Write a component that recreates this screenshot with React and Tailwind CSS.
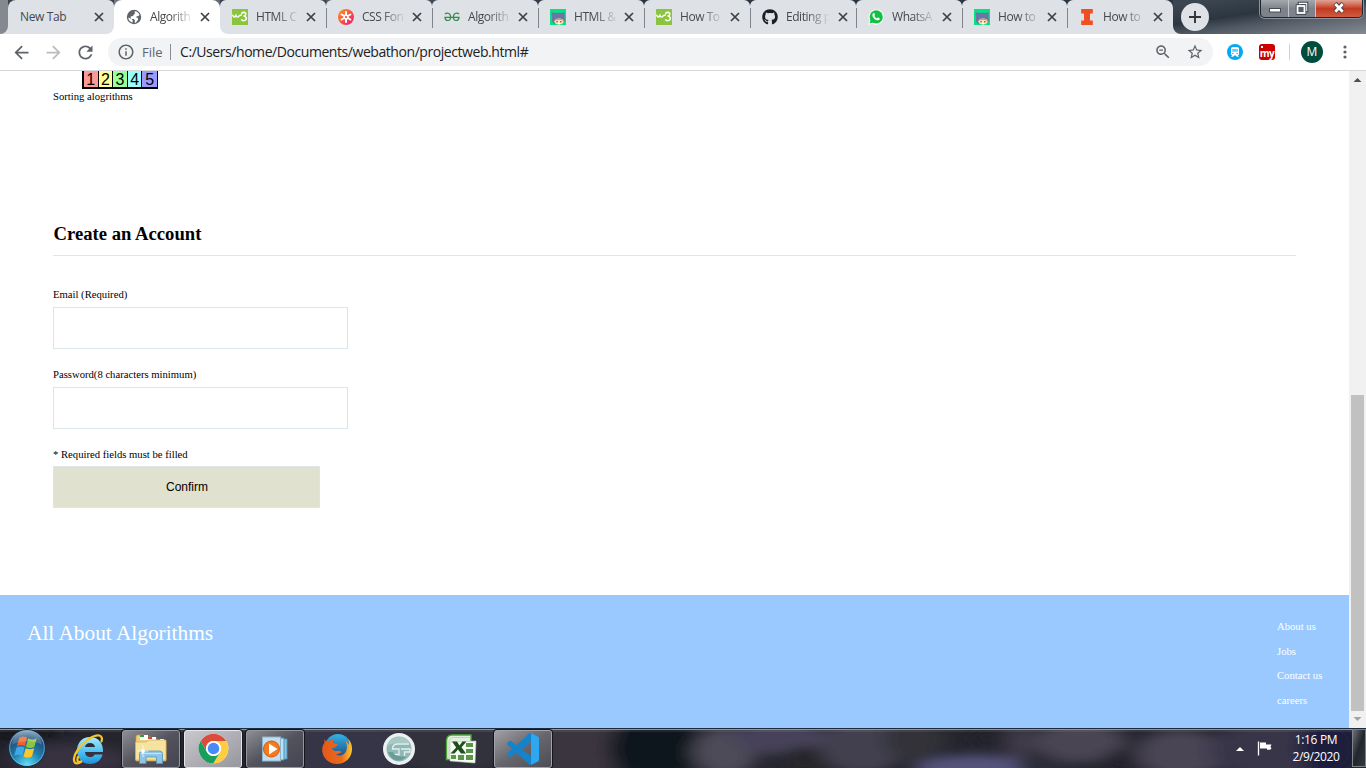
import React from "react";
import { FaGithub } from "react-icons/fa";

const PATHS = {
  back: "M20 11H7.83l5.59-5.59L12 4l-8 8 8 8 1.41-1.41L7.83 13H20v-2z",
  forward: "M12 4l-1.41 1.41L16.17 11H4v2h12.17l-5.58 5.59L12 20l8-8z",
  reload:
    "M17.65 6.35C16.2 4.9 14.21 4 12 4c-4.42 0-7.99 3.58-7.99 8s3.57 8 7.99 8c3.73 0 6.84-2.55 7.73-6h-2.08c-.82 2.33-3.04 4-5.65 4-3.31 0-6-2.69-6-6s2.69-6 6-6c1.66 0 3.14.69 4.22 1.78L13 11h7V4l-2.35 2.35z",
  info: "M11 17h2v-6h-2v6zm1-15C6.48 2 2 6.48 2 12s4.48 10 10 10 10-4.48 10-10S17.52 2 12 2zm0 18c-4.41 0-8-3.59-8-8s3.59-8 8-8 8 3.59 8 8-3.59 8-8 8zM11 9h2V7h-2v2z",
  zoomOut:
    "M15.5 14h-.79l-.28-.27C15.41 12.59 16 11.11 16 9.5 16 5.91 13.09 3 9.5 3S3 5.91 3 9.5 5.91 16 9.5 16c1.61 0 3.09-.59 4.23-1.57l.27.28v.79l5 4.99L20.49 19l-4.99-5zm-6 0C7.01 14 5 11.99 5 9.5S7.01 5 9.5 5 14 7.01 14 9.5 11.99 14 9.5 14zM7 8.7h5v1.5H7z",
  star: "M22 9.24l-7.19-.62L12 2 9.19 8.63 2 9.24l5.46 4.73L5.82 21 12 17.27 18.18 21l-1.63-7.03L22 9.24zM12 15.4l-3.76 2.27 1-4.28-3.32-2.88 4.38-.38L12 6.1l1.71 4.04 4.38.38-3.32 2.88 1 4.28L12 15.4z",
  code: "M23.15 2.587L18.21.21a1.494 1.494 0 0 0-1.705.29l-9.46 8.63-4.12-3.128a.999.999 0 0 0-1.276.057L.327 7.261A1 1 0 0 0 .326 8.74L3.899 12 .326 15.26a1 1 0 0 0 .001 1.479L1.65 17.94a.999.999 0 0 0 1.276.057l4.12-3.128 9.46 8.63a1.492 1.492 0 0 0 1.704.29l4.942-2.377A1.5 1.5 0 0 0 24 20.06V3.939a1.5 1.5 0 0 0-.85-1.352zm-5.146 14.861L10.826 12l7.178-5.448v10.896z",
};

function Glyph({ d, className }) {
  return (
    <svg viewBox="0 0 24 24" className={className} fill="currentColor">
      <path d={d} />
    </svg>
  );
}

function GlobeIcon() {
  return (
    <svg viewBox="0 0 16 16" className="size-4">
      <circle cx="8" cy="8" r="7.2" fill="#5f6368" />
      <path
        d="M8.600 2.300C10.800 2.300 13 3.800 13.500 6L12 7.300l-1.300-.1-.6 1 1.700.8.400 1.500-2.200 3-1.300.4.200-2.500-1-1.300-2.500-.2L4.300 8l1.200-.8 1.600-.1.600-1.600 1.200-.6z"
        fill="#fff"
      />
      <path d="M2.300 8.600l3.200 1.300 1.200 1.300-.2 2.500C4 13 2.300 11 2.300 8.600z" fill="#fff" />
    </svg>
  );
}

function W3Icon() {
  return (
    <svg viewBox="0 0 16 16" className="size-4">
      <rect width="16" height="16" rx=".5" fill="#8bc53f" />
      <path
        d="M.8 6.200C1.500 8.500 3 8.500 4 6.400 4.700 8.700 6.500 8.700 7.400 6.500L9.300 6"
        fill="none"
        stroke="#fff"
        strokeWidth="1.400"
        strokeLinecap="round"
      />
      <path
        d="M9.800 4.200c2-1.600 4.600-.6 3.900 1.400-.3 1-1.300 1.400-2.300 1.500 2 0 3.300 1.200 2.800 2.900-.6 1.900-3.300 2.200-4.600.7"
        fill="none"
        stroke="#fff"
        strokeWidth="1.500"
        strokeLinecap="round"
      />
    </svg>
  );
}

function AsteriskIcon() {
  return (
    <svg viewBox="0 0 16 16" className="size-4">
      <defs>
        <linearGradient id="ast" x1="0" y1="0" x2="1" y2="1">
          <stop offset="0" stopColor="#ff9a1f" />
          <stop offset=".5" stopColor="#f8543f" />
          <stop offset="1" stopColor="#e8158a" />
        </linearGradient>
      </defs>
      <circle cx="8" cy="8" r="8" fill="url(#ast)" />
      <path
        d="M8 3v3M8 10v3M3.600 5.500l2.700 1.500M9.700 9l2.700 1.500M12.400 5.500l-2.700 1.500M6.300 9l-2.700 1.500"
        stroke="#fff"
        strokeWidth="2"
        strokeLinecap="round"
      />
      <circle cx="8" cy="8" r="2" fill="none" stroke="#fff" strokeWidth="1.300" />
    </svg>
  );
}

function GeeksIcon() {
  return (
    <svg viewBox="0 0 16 16" className="size-4">
      <path
        d="M1 5.300C2 3.700 6.600 3.300 6.600 8c0 4.600-5.300 4.600-5.600.4h14c-.3 4.200-5.600 4.200-5.600-.4 0-4.700 4.600-4.300 5.600-2.700"
        fill="none"
        stroke="#2f8d46"
        strokeWidth="1.200"
      />
    </svg>
  );
}

function CatIcon() {
  return (
    <svg viewBox="0 0 16 16" className="size-4">
      <rect width="16" height="16" fill="#04e284" />
      <path
        d="M1.800 3.200l3.800.9c1.600-.5 3.400-.5 5 0l3.700-.9c.5 2 .3 3.300.2 4.400.6 3 .6 5.500-1.600 7.500H4.500C1.500 13 1.500 10 2.200 7.600 1.700 6 1.500 4.700 1.800 3.200z"
        fill="#6f74a8"
      />
      <ellipse cx="9" cy="12.500" rx="4.600" ry="3" fill="#fbe3b4" />
      <path d="M4.500 12c.5-3 8-3.200 9 0-2.200-1.500-7-1.500-9 0z" fill="#d99a58" />
      <path d="M6.300 12.800h1.500M10 12.800h1.500" stroke="#463b52" />
      <path d="M8 14.500h2" stroke="#fff" strokeWidth="1.500" />
    </svg>
  );
}

function WhatsIcon() {
  return (
    <svg viewBox="0 0 16 16" className="size-4">
      <path d="M.3 15.800l1.300-4A7.600 7.600 0 1 1 4.500 14.700z" fill="#fff" />
      <circle cx="8.200" cy="7.900" r="6.600" fill="#12c143" />
      <path d="M1.600 14.500l1.100-3.700 2.700 2.700z" fill="#12c143" />
      <path
        d="M5 4.600c.9-1 1.400-.4 1.700.5.500 1 .1 1.200-.3 1.800.5 1.200 1.400 2 2.600 2.500.8-1 1-1.100 2-.5 1 .5 1 .7.5 1.500-1.200 1.500-3.300.8-5-.5-1.800-1.500-3-3.700-1.500-5.300z"
        fill="#fff"
      />
    </svg>
  );
}

function IllinoisIcon() {
  return (
    <svg viewBox="0 0 16 16" className="size-4">
      <path d="M2.200 0h11.600v4.600h-2.800v6.800h2.800V16H2.200v-4.600H5V4.600H2.200z" fill="#f04e23" />
    </svg>
  );
}

function GithubIcon() {
  return <FaGithub className="size-4 text-[#1b1f23]" />;
}

const TABS = [
  { title: "New Tab" },
  { title: "Algorith", icon: GlobeIcon, active: true },
  { title: "HTML C", icon: W3Icon },
  { title: "CSS Fon", icon: AsteriskIcon },
  { title: "Algorith", icon: GeeksIcon },
  { title: "HTML &", icon: CatIcon },
  { title: "How To", icon: W3Icon },
  { title: "Editing p", icon: GithubIcon },
  { title: "WhatsA", icon: WhatsIcon },
  { title: "How to", icon: CatIcon, narrow: true },
  { title: "How to", icon: IllinoisIcon },
];

function Tab({ tab, index }) {
  const Icon = tab.icon;
  return (
    <div
      className={
        (tab.narrow ? "w-[105px] " : "w-[106px] ") +
        "shrink-0 " +
        (index === 0 || index === 2
          ? "bg-linear-to-b from-[#39434e] from-50% to-white to-50%"
          : "")
      }
    >
      <div
        className={
          "relative flex h-[34px] items-center pr-[9px] pl-3 " +
          (tab.active ? "rounded-t-lg bg-white" : "bg-[#dee1e6]") +
          (index === 0
            ? " rounded-tl-lg rounded-tr-[6px] rounded-br-lg"
            : index === 2
              ? " rounded-t-[6px] rounded-bl-lg"
              : index === 10
                ? " rounded-tl-[6px] rounded-tr-lg"
                : tab.active
                  ? ""
                  : " rounded-t-[6px]")
        }
      >
        {index > 2 && <span className="absolute top-[8px] left-0 h-5 w-px bg-[#80848a]" />}
        {Icon && (
          <span className="mr-2 shrink-0">
            <Icon />
          </span>
        )}
        <span
          className={
            "flex-1 text-[12px] leading-4 whitespace-nowrap text-[#45494d] " +
            (Icon
              ? "tracking-[-0.450px] [mask-image:linear-gradient(to_right,black_20px,transparent_44px)]"
              : "tracking-[-0.350px]")
          }
        >
          {tab.title}
        </span>
        <svg viewBox="0 0 12 12" className="ml-1.5 size-3 shrink-0">
          <path d="M2 2l8 8M10 2l-8 8" stroke="#3c4043" strokeWidth="1.700" />
        </svg>
      </div>
    </div>
  );
}

function WindowControls() {
  return (
    <div className="absolute top-0 right-[3px] flex h-[18px] w-[103px] overflow-hidden rounded-b-[5px] border border-t-0 border-[#20262d] shadow-[0_0_0_1px_#8b929b]">
      <div className="flex w-[28px] items-center justify-center border-r border-[#c3c7cc] bg-linear-to-b from-[#a4a9af] to-[#7d838a] to-50%">
        <svg viewBox="0 0 14 10" className="h-[10px] w-[14px]">
          <rect x="1.500" y="4.500" width="11" height="3.500" fill="#fff" stroke="#454b55" />
        </svg>
      </div>
      <div className="flex w-[27px] items-center justify-center border-r border-[#c3c7cc] bg-linear-to-b from-[#a4a9af] to-[#7d838a] to-50%">
        <svg viewBox="0 0 14 14" className="-mt-0.5 size-[14px]">
          <rect x="4.500" y="2.500" width="7" height="7" fill="none" stroke="#3b414b" strokeWidth="3.500" />
          <rect x="4.500" y="2.500" width="7" height="7" fill="none" stroke="#fff" strokeWidth="1.500" />
          <rect x="2.500" y="5" width="7" height="7" fill="#59606a" stroke="#3b414b" strokeWidth="3.500" />
          <rect x="2.500" y="5" width="7" height="7" fill="#59606a" stroke="#fff" strokeWidth="1.800" />
        </svg>
      </div>
      <div className="flex flex-1 items-center justify-center bg-linear-to-b from-[#e0a396] via-[#c23a20] via-50% to-[#cf5a40]">
        <svg viewBox="0 0 14 12" className="-mt-px h-3 w-[14px]">
          <path d="M3 1.500l8 8.500M11 1.500l-8 8.500" stroke="#4c3a42" strokeWidth="4.600" />
          <path d="M3.300 2l7.400 7.800M10.700 2l-7.400 7.800" stroke="#fff" strokeWidth="2.800" />
        </svg>
      </div>
    </div>
  );
}

function TabStrip() {
  return (
    <div className="relative flex h-[34px] shrink-0">
      <div className="flex bg-linear-to-r from-[#85888e] from-1% to-[#2b3541] to-50%">
        <div className="w-2 bg-[#dee1e6]">
          <div className="h-full rounded-br-lg bg-[#85888e]" />
        </div>
        {TABS.map((tab, i) => (
          <Tab key={i} tab={tab} index={i} />
        ))}
      </div>
      <div className="flex flex-1 bg-linear-to-b from-[#3a444f] from-50% to-[#dee1e6] to-50%">
        <div className="flex flex-1 rounded-bl-lg bg-[linear-gradient(172deg,#3a4550_10%,#2c3641_40%,#4f5862_58%,#858a92)] pl-2">
          <div className="mt-[3px] flex size-7 items-center justify-center rounded-full bg-[#dee1e6]">
            <svg viewBox="0 0 12 12" className="size-3">
              <path d="M6 0v12M0 6h12" stroke="#303439" strokeWidth="1.900" />
            </svg>
          </div>
        </div>
      </div>
      <WindowControls />
    </div>
  );
}

function Toolbar() {
  return (
    <div className="flex h-[37px] shrink-0 items-center border-b border-[#d5d7da] bg-white text-[#5f6368]">
      <div className="flex w-[108px] shrink-0 items-center gap-[11px] pl-[11px]">
        <Glyph d={PATHS.back} className="size-[21px]" />
        <Glyph d={PATHS.forward} className="size-[21px] text-[#babcbe]" />
        <Glyph d={PATHS.reload} className="size-[21px]" />
      </div>
      <div className="flex h-7 w-[1105px] shrink-0 items-center rounded-full bg-[#f1f3f4] pr-[9px] pl-[9px]">
        <Glyph d={PATHS.info} className="size-[18px]" />
        <span className="ml-[7px] w-[28px] text-[13px] leading-5">File</span>
        <span className="h-4 w-px bg-[#8a8d91]" />
        <span className="ml-[9px] flex-1 text-[14px] leading-5 tracking-[-0.435px] text-[#202124]">
          C:/Users/home/Documents/webathon/projectweb.html#
        </span>
        <Glyph d={PATHS.zoomOut} className="mr-[14px] size-[18px]" />
        <Glyph d={PATHS.star} className="size-[18px]" />
      </div>
      <svg viewBox="0 0 16 16" className="ml-[14px] size-4 shrink-0">
        <circle cx="8" cy="8" r="8" fill="#03a9f4" />
        <path
          d="M6 3h4q2 0 2 1.800V10q0 1.200-1.300 1.200l1.300 1.500H9.800l-1-1.200H7.200l-1 1.200H4l1.300-1.500Q4 11.200 4 10V4.800Q4 3 6 3z"
          fill="#fff"
        />
        <rect x="5.200" y="5" width="5.600" height="2.800" fill="#6ccbf8" />
        <path d="M5.200 9.500h1.300M9.500 9.500h1.300" stroke="#03a9f4" />
      </svg>
      <div className="relative ml-4 flex h-4 w-4 shrink-0 items-end justify-center rounded-[3px] bg-[#c00]">
        <span className="absolute top-[2px] left-[2px] size-[2px] bg-white" />
        <span className="-mt-1 mb-px text-[10px] leading-[12px] font-bold tracking-[-0.500px] text-white">
          my
        </span>
      </div>
      <span className="ml-[14px] h-4 w-px shrink-0 bg-[#cfd1d4]" />
      <div className="ml-[11px] flex size-[22px] shrink-0 items-center justify-center rounded-full bg-[#004d40] text-[12px] text-white">
        M
      </div>
      <svg viewBox="0 0 4 14" className="ml-[19.500px] h-[14px] w-1 shrink-0" fill="currentColor">
        <circle cx="2" cy="2" r="1.600" />
        <circle cx="2" cy="7" r="1.600" />
        <circle cx="2" cy="12" r="1.600" />
      </svg>
    </div>
  );
}

const CELLS = [
  ["1", "bg-[#ff9999]"],
  ["2", "bg-[#ffff99]"],
  ["3", "bg-[#99ff99]"],
  ["4", "bg-[#99ffff]"],
  ["5", "bg-[#9999ff]"],
];

function Page() {
  return (
    <main className="flex min-w-0 flex-1 flex-col bg-white font-['Liberation_Serif',serif] text-[10.670px] leading-[13px] text-black">
      <div className="flex h-[18px] shrink-0 items-end overflow-hidden pl-[82px]">
        <div className="flex border-r border-b-2 border-l-2 border-black">
          {CELLS.map(([n, color], i) => (
            <span
              key={n}
              className={
                "flex h-4 w-[14.600px] items-center justify-center border-black pt-px font-['Liberation_Sans',sans-serif] text-[16px] leading-4 " +
                (i < 4 ? "border-r-[1.500px] " : "") +
                color
              }
            >
              {n}
            </span>
          ))}
        </div>
      </div>
      <p className="mt-px h-[13px] pl-[53px]">Sorting alogrithms</p>
      <section className="mt-[119px] flex h-[373px] shrink-0 flex-col pr-[53px] pl-[53px]">
        <h2 className="h-[34px] border-b border-[#dce6ea] pl-[0.500px] text-[18.670px] leading-[24px] font-bold">
          Create an Account
        </h2>
        <label className="mt-[32px] h-[13px]">Email (Required)</label>
        <input className="mt-[6px] h-[42px] w-[295px] shrink-0 border border-[#dce6ea] outline-none" />
        <label className="mt-[19px] h-[13px]">Password(8 characters minimum)</label>
        <input className="mt-[6px] h-[42px] w-[295px] shrink-0 border border-[#dce6ea] outline-none" />
        <p className="mt-[19px] h-[13px]">* Required fields must be filled</p>
        <button className="mt-[5px] h-[42px] w-[267px] shrink-0 border border-[#dce6ea] bg-[#e1e1d0] pl-px font-['Liberation_Sans',sans-serif] text-[12px]">
          Confirm
        </button>
      </section>
      <footer className="flex flex-1 justify-between bg-[#99c9ff] pr-[26px] pl-[27px] text-white">
        <span className="mt-[26px] text-[21.330px] leading-6">All About Algorithms</span>
        <nav className="mt-[25px] flex w-[46px] flex-col gap-[11.500px] whitespace-nowrap">
          <a>About us</a>
          <a>Jobs</a>
          <a>Contact us</a>
          <a>careers</a>
        </nav>
      </footer>
    </main>
  );
}

function Scrollbar() {
  return (
    <div className="flex w-[17px] shrink-0 flex-col items-center bg-[#f1f1f1]">
      <svg viewBox="0 0 17 17" className="size-[17px]">
        <path d="M8.500 7L12.500 11h-8z" fill="#505050" />
      </svg>
      <div className="mt-[307px] h-[316px] w-[13px] bg-[#c1c1c1]" />
      <svg viewBox="0 0 17 17" className="size-[17px]">
        <path d="M4.500 6h8l-4 4z" fill="#a3a3a3" />
      </svg>
    </div>
  );
}

function TaskbarBackdrop() {
  return (
    <svg viewBox="0 0 1366 40" className="absolute inset-0 h-10 w-[1366px]" preserveAspectRatio="none">
      <defs>
        <filter id="soft" x="-5%" y="-60%" width="110%" height="220%">
          <feGaussianBlur stdDeviation="10 5" />
        </filter>
      </defs>
      <rect width="1366" height="40" fill="#25252f" />
      <g filter="url(#soft)">
        <ellipse cx="70" cy="32" rx="60" ry="16" fill="#37323f" />
        <ellipse cx="20" cy="4" rx="40" ry="10" fill="#12131b" />
        <ellipse cx="340" cy="22" rx="70" ry="34" fill="#353546" />
        <ellipse cx="455" cy="14" rx="60" ry="34" fill="#30303d" />
        <ellipse cx="575" cy="20" rx="50" ry="34" fill="#3b363f" />
        <ellipse cx="655" cy="20" rx="45" ry="34" fill="#11151a" />
        <ellipse cx="725" cy="24" rx="32" ry="24" fill="#4e4b58" />
        <ellipse cx="780" cy="10" rx="48" ry="16" fill="#46435a" />
        <ellipse cx="808" cy="32" rx="28" ry="14" fill="#26272b" />
        <ellipse cx="862" cy="18" rx="42" ry="28" fill="#433f50" />
        <ellipse cx="915" cy="12" rx="30" ry="20" fill="#303337" />
        <ellipse cx="975" cy="40" rx="60" ry="13" fill="#54527a" />
        <ellipse cx="988" cy="10" rx="22" ry="10" fill="#22232c" />
        <ellipse cx="1020" cy="14" rx="15" ry="18" fill="#413b48" />
        <ellipse cx="1080" cy="14" rx="46" ry="20" fill="#4a4452" />
        <ellipse cx="1045" cy="38" rx="30" ry="8" fill="#2a2a38" />
        <ellipse cx="1120" cy="34" rx="16" ry="12" fill="#20202b" />
        <ellipse cx="1180" cy="26" rx="44" ry="24" fill="#4a4454" />
        <ellipse cx="1270" cy="22" rx="60" ry="28" fill="#38364a" />
        <ellipse cx="1330" cy="20" rx="30" ry="28" fill="#1e1e3c" />
      </g>
      <rect width="1366" height="1" fill="#1c2b3b" />
      <rect y="1" width="1366" height="1" fill="#8796a8" />
      <rect y="2" width="1366" height="2" fill="#ffffff" opacity=".08" />
    </svg>
  );
}

function StartOrb() {
  return (
    <svg viewBox="0 0 40 40" className="size-10">
      <defs>
        <radialGradient id="orb" cx=".5" cy=".95" r=".95">
          <stop offset="0" stopColor="#5fe0f8" />
          <stop offset=".4" stopColor="#2384b4" />
          <stop offset=".75" stopColor="#1d4f7c" />
          <stop offset="1" stopColor="#7fa3bd" />
        </radialGradient>
      </defs>
      <circle cx="20" cy="20" r="18.500" fill="url(#orb)" stroke="#152e49" />
      <circle cx="20" cy="20" r="17.300" fill="none" stroke="#9cc5da" strokeOpacity=".6" />
      <path d="M12.200 9.700c2.800-1.600 5.300-1.700 7.900-.2l-2.300 8.700c-2.500-1.500-5.200-1.500-7.900.2z" fill="#f1622c" />
      <path d="M21.200 10.200c2.800 1.600 5.600 1.600 8.500 0l-2.300 8.600c-2.800 1.600-5.600 1.600-8.400 0z" fill="#8cc63e" />
      <path d="M9.500 19.700c2.700-1.600 5.400-1.600 7.900-.2l-2.200 8.400c-2.600-1.400-5.200-1.400-7.900.2z" fill="#3fa9e8" />
      <path d="M18.700 20.200c2.800 1.500 5.600 1.500 8.500 0l-2.300 8.400c-2.800 1.600-5.600 1.600-8.400 0z" fill="#fbc826" />
      <path d="M5 17C6 8 13 3 20 3s14 5 15 14C28 12 12 12 5 17z" fill="#fff" opacity=".2" />
    </svg>
  );
}

function ExplorerE() {
  return (
    <svg viewBox="0 0 34 34" className="size-[34px]">
      <defs>
        <linearGradient id="ie" x1="0" y1="0" x2="0" y2="1">
          <stop offset="0" stopColor="#a6eafd" />
          <stop offset=".6" stopColor="#45bdf2" />
          <stop offset="1" stopColor="#1e90d8" />
        </linearGradient>
      </defs>
      <path
        d="M18 5C10 5 5 11 5 18.500S10 32 18 32c6.500 0 11-3.500 12.500-9.500H22.500c-.8 1.800-2.200 2.600-4.300 2.600-3 0-5-1.900-5.200-5.100h18C31.500 11 26 5 18 5zm-5 10c.5-2.400 2.400-4 5-4s4.500 1.600 5 4z"
        fill="url(#ie)"
        fillRule="evenodd"
      />
      <path
        d="M29.500 9.500c1-3 .3-5.500-2.200-6C22 2.500 12 9 6 17.500 1.500 24 .8 29.500 3.500 31c1.500.8 4-.1 6.500-1.700C5.500 30.500 4.500 29 6 25"
        fill="none"
        stroke="#f8c422"
        strokeWidth="2.200"
        strokeLinecap="round"
      />
    </svg>
  );
}

function FolderIcon() {
  return (
    <svg viewBox="0 0 34 34" className="size-[34px]">
      <path d="M2 5q0-2 2-2h6l2 2h5l1 2h6l2 2h4q2 0 2 2v18H2z" fill="#edd27a" stroke="#c9a546" strokeWidth=".7" />
      <rect x="6" y="3" width="8" height="5" fill="#fff" />
      <rect x="6" y="3" width="4" height="2" fill="#26a43a" />
      <rect x="14" y="5" width="8" height="5" fill="#fff" />
      <rect x="14" y="5" width="4" height="2" fill="#d8432a" />
      <rect x="22" y="7" width="8" height="5" fill="#fff" />
      <rect x="22" y="7" width="4" height="2" fill="#2a91dd" />
      <path d="M1.500 10h11l2-2H32v20H1.500z" fill="#f7e3a0" stroke="#d0b05b" strokeWidth=".7" />
      <path d="M5.500 31.500V22q0-3 3-3h17q3 0 3 3v9.500h-6V25H12v6.500z" fill="#8ec5e6" stroke="#4e95c2" strokeWidth=".8" />
      <path d="M6.500 21.500h21" stroke="#c8e6f5" />
      <path d="M9 13v12M3.500 19h11" stroke="#fff" strokeWidth=".9" opacity=".8" />
      <circle cx="9" cy="19" r="2" fill="#fff" opacity=".9" />
    </svg>
  );
}

function ChromeIcon() {
  return (
    <svg viewBox="0 0 48 48" className="size-[31px]">
      <circle cx="24" cy="24" r="23" fill="#fff" />
      <path d="M4.080 12.500A23 23 0 0 1 43.900 12.500H24A11.500 11.500 0 0 0 14.040 29.750z" fill="#dd4b3a" />
      <path d="M43.920 12.500A23 23 0 0 1 24 47L33.960 29.750A11.500 11.500 0 0 0 24 12.500z" fill="#ffcd40" />
      <path d="M4.080 12.500A23 23 0 0 0 24 47L33.960 29.750A11.500 11.500 0 0 1 14.040 29.750z" fill="#199f5b" />
      <circle cx="24" cy="24" r="11.500" fill="#fff" />
      <circle cx="24" cy="24" r="9" fill="#4a8af4" />
    </svg>
  );
}

function MediaIcon() {
  return (
    <svg viewBox="0 0 30 30" className="size-[30px]">
      <path d="M20 5h7v20h-7z" fill="#8dc3df" stroke="#4b92b8" />
      <path d="M17 4h7v22h-7z" fill="#bfe0ef" stroke="#4b92b8" />
      <rect x="2.500" y="3" width="18" height="24" fill="#c4dded" stroke="#8ab5cf" />
      <circle cx="11.500" cy="15" r="8" fill="#f37a1e" stroke="#d85a0c" />
      <path d="M9 9.500l8.500 5.500L9 20.500z" fill="#fff" />
    </svg>
  );
}

function FirefoxIcon() {
  return (
    <svg viewBox="0 0 32 32" className="size-8">
      <defs>
        <linearGradient id="fox" x1="0" y1="0" x2="1" y2="0">
          <stop offset="0" stopColor="#e4591a" />
          <stop offset=".65" stopColor="#ea6a1c" />
          <stop offset="1" stopColor="#fcc92f" />
        </linearGradient>
        <linearGradient id="sea" x1="0" y1="0" x2="0" y2="1">
          <stop offset="0" stopColor="#35b2e4" />
          <stop offset="1" stopColor="#16407f" />
        </linearGradient>
      </defs>
      <circle cx="17" cy="14" r="13" fill="url(#sea)" />
      <path
        d="M3 6c0 2 .3 2.500.8 3C1 13 .5 17 2 21.500 4 27 9.500 31 16 31c9 0 15-7 15-15 0-5-1.500-8-4-10 1 2 1.300 4 1 6-1-2-2-3-3.500-4 2 4 2 8 .2 11-2 3.500-6.500 4.500-10 2.500 3 0 4-2 6-2-.5-1.500-3-2-5-1.500-2 .3-4.500-.8-4.700-3 1-.5 2 0 3-.3.2-1.500 2-2 3-3-.5-1-3.500-.5-5-2-.3-1.500.3-3 1.500-4-2 0-3.500.8-4.700 2.300C7 7.500 5.500 7.500 4.700 8 4 7.500 3.300 7 3 6z"
        fill="url(#fox)"
      />
    </svg>
  );
}

function DiscIcon() {
  return (
    <svg viewBox="0 0 34 34" className="size-[34px]">
      <circle cx="17" cy="17" r="16" fill="#edf0f0" />
      <circle cx="17" cy="17" r="12.500" fill="#8fb9b6" />
      <path d="M5.500 13C8 7.500 13 5 18 5c5 .3 8.500 2.500 10.500 6H17c-5 0-8 1.500-11.500 2z" fill="#a8cac7" />
      <path d="M27 12H16c-4 0-5.500 2-5.500 5H17v5.500H9M19 17h9v3h-5.500v4" fill="none" stroke="#e6efee" strokeWidth="1.300" />
      <path d="M6 20h5c2 4 6 5 13 4.500C20 30 10 31 6 20z" fill="#6c9c99" />
    </svg>
  );
}

function ExcelIcon() {
  return (
    <svg viewBox="0 0 34 34" className="size-[34px]">
      <path d="M2.500 27.500V9q0-6 6-6H27v24.500z" fill="#e3f0df" stroke="#4ca635" strokeWidth="1.400" />
      <path d="M5 26V10q0-4.500 4.500-4.500H25.500" fill="none" stroke="#b9d9af" />
      <path d="M6 10l26-1-1 22-25-2z" fill="#f7fbf5" stroke="#b7d0b0" strokeWidth=".6" />
      <path d="M22 11h7v4h-7zM22 17h7v4h-7zM22 23h7v5h-7zM14 23h6v5h-6zM7 23h5v4H7z" fill="#5b9646" />
      <path d="M8 9.500h5l2.500 4 3-4h4l-5 5.800 4.500 6.200h-5l-3-4-3.500 4h-4l5.700-6z" fill="#1f4f1c" />
    </svg>
  );
}

function CodeIcon() {
  return (
    <svg viewBox="0 0 24 24" className="size-8">
      <path d={PATHS.code} fill="#1583cb" />
      <path d="M18 .3q.3-.1.600.1L23.150 2.587Q24 3 24 3.939V20.060q0 .9-.85 1.352l-4.550 2.200q-.3.100-.600 0z" fill="#2fa7ef" />
    </svg>
  );
}

const APPS = [
  { icon: ExplorerE },
  { icon: FolderIcon, open: true },
  { icon: ChromeIcon, open: true, focus: true },
  { icon: MediaIcon, open: true },
  { icon: FirefoxIcon },
  { icon: DiscIcon },
  { icon: ExcelIcon },
  { icon: CodeIcon, open: true, lit: true },
];

function Taskbar() {
  return (
    <div className="relative h-10 shrink-0 overflow-hidden text-white">
      <TaskbarBackdrop />
      <div className="relative flex h-10 items-center">
        <div className="ml-[7px] h-10 w-[53px]">
          <StartOrb />
        </div>
        <div className="flex gap-1">
          {APPS.map(({ icon: Icon, open, focus, lit }, i) => (
            <div
              key={i}
              className={
                "mt-px flex h-[38px] w-[58px] items-center justify-center rounded-[3px] " +
                (focus
                  ? "border border-[#e6e6ea] bg-linear-to-br from-[#c8c8cd] to-[#96969d] shadow-[0_0_0_1px_#1a1a22]"
                  : lit
                    ? "border border-[#a3a3ab] bg-linear-to-br from-[#a0a0a5] via-[#66666c] to-[#4d4d54] shadow-[0_0_0_1px_#15151c]"
                    : open
                      ? "border border-[#96969f] bg-linear-to-br from-[#8e8e96] via-[#53535d] to-[#454552] shadow-[0_0_0_1px_#15151c]"
                      : "")
              }
            >
              <Icon />
            </div>
          ))}
        </div>
        <div className="ml-auto flex items-center">
          <svg viewBox="0 0 8 4" className="mt-0.5 mr-[13px] h-1 w-2">
            <path d="M4 0l4 4H0z" fill="#fff" />
          </svg>
          <svg viewBox="0 0 16 16" className="mr-[18px] size-4">
            <path d="M1.500 1.500v14" stroke="#fff" strokeWidth="1.300" />
            <path d="M3 2.500h6v2h5.500l-1 2.300 1 1.700-1.500 1.200h-3V8.500H3z" fill="#fff" />
          </svg>
          <div className="flex w-[50px] flex-col items-center text-[12px] leading-[17px] tracking-[-0.350px] whitespace-nowrap">
            <span>1:16 PM</span>
            <span>2/9/2020</span>
          </div>
          <div className="ml-[11px] h-[38px] w-[14px] border border-[#7e8388] bg-linear-to-br from-[#6c7278] via-[#23262c] to-[#34373e]" />
        </div>
      </div>
    </div>
  );
}

export default function App() {
  return (
    <div className="flex h-[768px] w-[1366px] flex-col overflow-hidden bg-white font-['Open_Sans','Noto_Sans',sans-serif]">
      <TabStrip />
      <Toolbar />
      <div className="flex h-[657px] shrink-0">
        <Page />
        <Scrollbar />
      </div>
      <Taskbar />
    </div>
  );
}
